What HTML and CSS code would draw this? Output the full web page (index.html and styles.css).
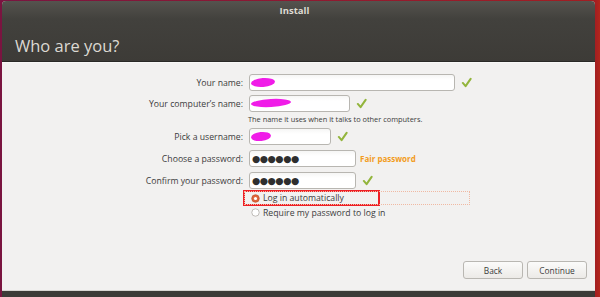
FILE: index.html
```html
<!DOCTYPE html>
<html lang="en">
  <head>
    <meta charset="UTF-8" />
    <title>Install</title>
    <link rel="stylesheet" href="styles.css">
  </head>
  <body>
    <div class="window">
      <div class="titlebar">
        <div class="title">Install</div>
        <div class="heading">Who are you?</div>
      </div>
      <div class="content">
        <div class="form">
          <div class="row">
            <label class="label">Your name:</label>
            <div class="field">
              <div class="input w-name"><span class="scribble s1"></span></div>
              <svg class="check" viewBox="0 0 12 12"><path d="M2 6.5 L5 10 L10.5 2" /></svg>
            </div>
          </div>
          <div class="row">
            <label class="label">Your computer’s name:</label>
            <div class="field">
              <div class="input w-comp"><span class="scribble s2"></span></div>
              <svg class="check" viewBox="0 0 12 12"><path d="M2 6.5 L5 10 L10.5 2" /></svg>
            </div>
          </div>
          <div class="hint">The name it uses when it talks to other computers.</div>
          <div class="row">
            <label class="label">Pick a username:</label>
            <div class="field">
              <div class="input w-user"><span class="scribble s3"></span></div>
              <svg class="check" viewBox="0 0 12 12"><path d="M2 6.5 L5 10 L10.5 2" /></svg>
            </div>
          </div>
          <div class="row">
            <label class="label">Choose a password:</label>
            <div class="field">
              <div class="input w-pass"><span class="dots">●●●●●●</span></div>
              <span class="strength">Fair password</span>
            </div>
          </div>
          <div class="row">
            <label class="label">Confirm your password:</label>
            <div class="field">
              <div class="input w-pass"><span class="dots">●●●●●●</span></div>
              <svg class="check" viewBox="0 0 12 12"><path d="M2 6.5 L5 10 L10.5 2" /></svg>
            </div>
          </div>
          <div class="options">
            <div class="option selected">
              <div class="focus"></div>
              <svg class="radio" viewBox="0 0 10 10"><circle cx="5" cy="5" r="4.2" fill="#e0653a" stroke="#c2502a" stroke-width="0.8" /><circle cx="5" cy="5" r="1.8" fill="#fff" /></svg>
              <span>Log in automatically</span>
            </div>
            <div class="option">
              <svg class="radio" viewBox="0 0 10 10"><circle cx="5" cy="5" r="4.1" fill="#fff" stroke="#aaa6a0" stroke-width="0.8" /></svg>
              <span>Require my password to log in</span>
            </div>
          </div>
        </div>
        <div class="buttons">
          <button class="btn back">Back</button>
          <button class="btn continue">Continue</button>
        </div>
      </div>
      <div class="bottombar"></div>
    </div>
  </body>
</html>
```
FILE: styles.css
```css
body {
  margin: 0;
  padding: 0;
  width: 600px;
  height: 297px;
  overflow: hidden;
  background: linear-gradient(to right, #7a1440 0, #7a1440 2px, #a21e22 595px, #b3261c 600px);
  font-family: "Open Sans", "DejaVu Sans", sans-serif;
}

.window {
  margin: 1px 5px 0 2px;
  height: 296px;
  display: flex;
  flex-direction: column;
  background-color: #f2f1f0;
  border-radius: 4px 4px 0 0;
  overflow: hidden;
}

.titlebar {
  height: 60px;
  background: linear-gradient(to bottom, #55534e 0, #42413d 18px, #3d3b37 60px);
  border-bottom: 1px solid #2a2926;
}

.title {
  text-align: center;
  color: #dfdbd2;
  font-size: 9.5px;
  font-weight: bold;
  padding-top: 3px;
  padding-right: 8px;
}

.heading {
  color: #dcd9d2;
  font-size: 16.5px;
  margin-top: 17px;
  margin-left: 13px;
}

.content {
  flex: 1;
  display: flex;
  flex-direction: column;
  border-top: 1px solid #f8f8f7;
}

.form {
  padding-top: 11px;
  flex: 1;
}

.row {
  display: flex;
  align-items: center;
  height: 17px;
  margin-bottom: 5px;
}

.row:first-child {
  margin-bottom: 4px;
}

.label {
  width: 247px;
  padding-right: 6px;
  box-sizing: border-box;
  text-align: right;
  font-size: 8.7px;
  color: #3c3c3c;
}

.field {
  display: flex;
  align-items: center;
}

.input {
  height: 15px;
  border: 1px solid #b8b6b1;
  border-radius: 3px;
  background: linear-gradient(to bottom, #f6f6f5, #ffffff 5px);
  position: relative;
  display: flex;
  align-items: center;
}

.w-name {
  width: 204px;
}

.w-comp {
  width: 99px;
}

.w-user {
  width: 80px;
}

.w-pass {
  width: 105px;
}

.scribble {
  position: absolute;
  background-color: #f01ce8;
  border-radius: 50%;
}

.s1 {
  left: 1px;
  top: 3px;
  width: 24px;
  height: 9px;
  transform: rotate(-4deg);
}

.s2 {
  left: 1px;
  top: 3px;
  width: 40px;
  height: 8px;
  transform: rotate(-3deg);
}

.s3 {
  left: 1px;
  top: 3px;
  width: 20px;
  height: 9px;
  transform: rotate(-6deg);
}

.dots {
  font-family: "DejaVu Sans", sans-serif;
  font-size: 9.5px;
  color: #2e2e2e;
  letter-spacing: -0.5px;
  margin-left: 2px;
}

.check {
  width: 11px;
  height: 11px;
  margin-left: 6px;
  fill: none;
  stroke: #93b53c;
  stroke-width: 2.2;
  stroke-linecap: round;
  stroke-linejoin: round;
}

.strength {
  margin-left: 4px;
  font-size: 8px;
  font-weight: bold;
  color: #f39c1c;
}

.hint {
  font-size: 7.4px;
  color: #3c3c3c;
  margin-left: 246px;
  margin-top: -3px;
  margin-bottom: 4px;
  height: 10px;
}

.options {
  margin-left: 241px;
  margin-top: -4px;
}

.option {
  position: relative;
  display: flex;
  align-items: center;
  height: 13px;
  font-size: 8.7px;
  color: #3c3c3c;
  padding-left: 8px;
}

.option span {
  margin-left: 3px;
}

.option.selected {
  width: 127px;
  border: 2px solid #ee1f26;
  height: 12px;
  padding-left: 6px;
}

.focus {
  position: absolute;
  left: -1px;
  top: -1px;
  width: 224px;
  height: 12px;
  border: 1px dotted #f0b9a2;
}

.radio {
  width: 9px;
  height: 9px;
  position: relative;
}

.buttons {
  display: flex;
  justify-content: flex-end;
  gap: 4px;
  padding-right: 8px;
  margin-bottom: 11px;
}

.btn {
  height: 18px;
  width: 60px;
  font-family: "Open Sans", "DejaVu Sans", sans-serif;
  font-size: 8.4px;
  color: #3c3c3c;
  border: 1px solid #b9b7b2;
  border-radius: 3px;
  background: linear-gradient(to bottom, #fbfbfa, #eceae7);
  padding: 0;
}

.bottombar {
  height: 6px;
  background-color: #3c3b37;
  border-top: 1px solid #d8d6d2;
}
```
